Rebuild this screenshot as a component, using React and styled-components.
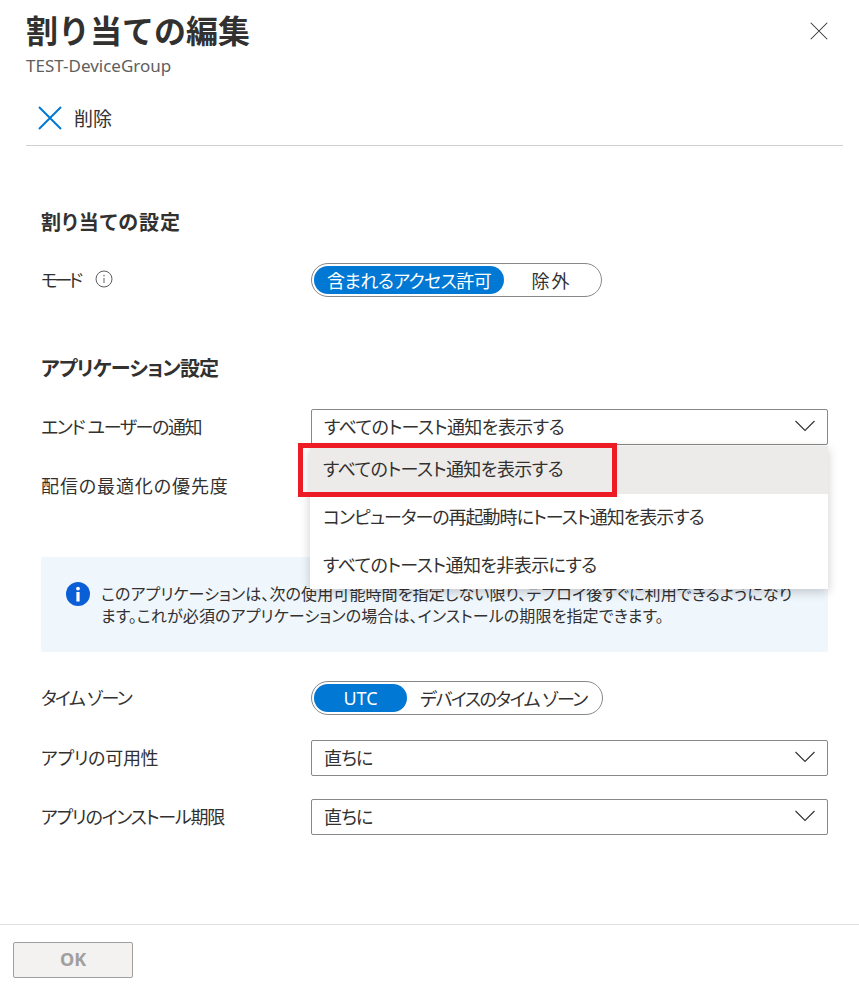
import React from 'react';
import styled, { createGlobalStyle } from 'styled-components';

const GlobalStyle = createGlobalStyle`
  html, body {
    margin: 0;
    padding: 0;
    background: #fff;
  }
  body {
    font-family: "Noto Sans", "Noto Sans CJK JP", sans-serif;
    font-feature-settings: "palt";
    color: #323130;
  }
`;

const Blade = styled.div`
  width: 859px;
  height: 984px;
  display: flex;
  flex-direction: column;
  overflow: hidden;
`;

const Header = styled.header`
  display: flex;
  justify-content: space-between;
  padding: 8px 31px 0 26px;
  height: 81px;
  box-sizing: border-box;
`;

const Title = styled.h1`
  margin: 0;
  font-size: 32px;
  line-height: 46px;
  font-weight: 700;
  font-feature-settings: normal;
`;

const Subtitle = styled.div`
  font-size: 17px;
  line-height: 24px;
  color: #605e5c;
`;

const CloseButton = styled.div`
  margin-top: 14px;
  width: 18px;
  height: 18px;
  line-height: 0;
`;

const Toolbar = styled.div`
  margin: 0 16px 0 26px;
  height: 65px;
  padding: 9px 0 0 12px;
  box-sizing: border-box;
  display: flex;
  align-items: center;
  gap: 12px;
  border-bottom: 1px solid #d2d0ce;
  font-size: 19px;
`;

const Content = styled.main`
  flex: 1;
  padding: 61px 31px 0 41px;
`;

const SectionTitle = styled.h2`
  margin: 0 0 ${p => p.$gap ?? 23}px;
  font-size: 20px;
  line-height: 32px;
  font-weight: 700;
  letter-spacing: ${p => p.$track ?? 0}px;
`;

const Row = styled.div`
  display: grid;
  grid-template-columns: 270px 517px;
  align-items: center;
  min-height: 36px;
  margin-bottom: ${p => p.$gap ?? 23}px;
`;

const Label = styled.div`
  display: flex;
  align-items: center;
  gap: 15px;
  padding-bottom: 2px;
  font-size: 18px;
`;

// the reference's UI font sets kana tighter than kanji, so strings are tracked one by one
const Text = styled.span`
  letter-spacing: ${p => p.$track ?? 0}px;
  white-space: nowrap;
`;

const Pill = styled.div`
  display: inline-flex;
  justify-self: start;
  align-items: center;
  height: 34px;
  width: ${p => p.$w}px;
  box-sizing: border-box;
  padding: 2px;
  border: 1px solid #8a8886;
  border-radius: 17px;
`;

const PillOption = styled.div`
  height: 100%;
  display: flex;
  align-items: center;
  justify-content: center;
  flex: ${p => (p.$active ? `0 0 ${p.$w}px` : 1)};
  border-radius: 14px;
  padding-bottom: 1px;
  box-sizing: border-box;
  font-size: 18px;
  background: ${p => (p.$active ? '#0078d4' : 'transparent')};
  color: ${p => (p.$active ? '#fff' : '#323130')};
`;

const SelectWrap = styled.div`
  position: relative;
`;

const Select = styled.div`
  height: 36px;
  box-sizing: border-box;
  display: flex;
  align-items: center;
  justify-content: space-between;
  padding: 0 12px 2px;
  border: 1px solid #8a8886;
  border-radius: 2px;
  font-size: 18px;
`;

const Menu = styled.div`
  position: absolute;
  top: 37px;
  left: -1px;
  right: 0;
  z-index: 5;
  background: #fff;
  box-shadow: 0 3px 10px rgba(0, 0, 0, 0.2);
`;

const MenuItem = styled.div`
  height: 47.7px;
  box-sizing: border-box;
  display: flex;
  align-items: center;
  padding: 0 0 3px 13px;
  font-size: 18px;
  background: ${p => (p.$selected ? '#edebe9' : '#fff')};
`;

const Highlight = styled.div`
  position: absolute;
  top: 34px;
  left: -13px;
  width: 319px;
  height: 54px;
  box-sizing: border-box;
  border: 5px solid #ed1c24;
  z-index: 6;
`;

const InfoBox = styled.div`
  display: flex;
  gap: 11px;
  height: 95px;
  box-sizing: border-box;
  padding: 25px 0 0 25px;
  margin: 53px 0 28px;
  background: #eff6fc;
  border-radius: 2px;
  font-size: 16px;
  line-height: 22px;
`;

const InfoText = styled.div`
  margin-top: 1px;
  display: flex;
  flex-direction: column;
`;

const Footer = styled.footer`
  height: 60px;
  box-sizing: border-box;
  padding: 17px 13px 0;
  border-top: 1px solid #e1dfdd;
`;

const OkButton = styled.div`
  width: 120px;
  height: 36px;
  box-sizing: border-box;
  padding-bottom: 2px;
  display: flex;
  align-items: center;
  justify-content: center;
  background: #f3f2f1;
  border: 1px solid #a19f9d;
  border-radius: 2px;
  color: #a19f9d;
  font-size: 18px;
  font-weight: 700;
`;

const Cross = ({ size, color, width }) => (
  <svg width={size} height={size} viewBox="0 0 24 24" fill="none">
    <path d="M1 1L23 23M23 1L1 23" stroke={color} strokeWidth={width} />
  </svg>
);

const Chevron = () => (
  <svg width="20" height="12" viewBox="0 0 20 12" fill="none">
    <path d="M0.5 1L10 10.5L19.5 1" stroke="#323130" strokeWidth="1.1" />
  </svg>
);

const InfoOutline = () => (
  <svg width="18" height="18" viewBox="0 0 18 18" fill="none">
    <circle cx="9" cy="9" r="8" stroke="#605e5c" strokeWidth="1" />
    <path d="M9 8V13" stroke="#8a8886" strokeWidth="1.3" />
    <circle cx="9" cy="5.6" r="0.9" fill="#8a8886" />
  </svg>
);

const InfoSolid = () => (
  <svg width="24" height="24" viewBox="0 0 24 24" style={{ flexShrink: 0 }}>
    <circle cx="12" cy="12" r="12" fill="#0a5fd6" />
    <rect x="10.4" y="10" width="3.2" height="9.5" fill="#fff" />
    <circle cx="12" cy="6.6" r="1.9" fill="#fff" />
  </svg>
);

const SelectField = ({ children, track }) => (
  <Select>
    <Text $track={track}>{children}</Text>
    <Chevron />
  </Select>
);

const App = () => (
  <Blade>
    <GlobalStyle />
    <Header>
      <div>
        <Title>割り当ての編集</Title>
        <Subtitle>TEST-DeviceGroup</Subtitle>
      </div>
      <CloseButton>
        <Cross size={18} color="#323130" width={1.4} />
      </CloseButton>
    </Header>
    <Toolbar>
      <Cross size={24} color="#0078d4" width={2} />
      <span>削除</span>
    </Toolbar>
    <Content>
      <SectionTitle $track={1}>割り当ての設定</SectionTitle>
      <Row $gap={55}>
        <Label>
          <Text $track={-3.5}>モード</Text>
          <InfoOutline />
        </Label>
        <Pill $w={291}>
          <PillOption $active $w={190}><Text $track={-0.6}>含まれるアクセス許可</Text></PillOption>
          <PillOption><Text $track={2}>除外</Text></PillOption>
        </Pill>
      </Row>
      <SectionTitle $gap={24} $track={-0.8}>アプリケーション設定</SectionTitle>
      <Row>
        <Label><Text $track={-1.4}>エンド ユーザーの通知</Text></Label>
        <SelectWrap>
          <SelectField track={-0.55}>すべてのトースト通知を表示する</SelectField>
          <Menu>
            <MenuItem $selected><Text $track={-0.55}>すべてのトースト通知を表示する</Text></MenuItem>
            <MenuItem><Text $track={-1}>コンピューターの再起動時にトースト通知を表示する</Text></MenuItem>
            <MenuItem><Text $track={-0.6}>すべてのトースト通知を非表示にする</Text></MenuItem>
          </Menu>
          <Highlight />
        </SelectWrap>
      </Row>
      <Row $gap={0}>
        <Label><Text $track={0.9}>配信の最適化の優先度</Text></Label>
        <SelectField />
      </Row>
      <InfoBox>
        <InfoSolid />
        <InfoText>
          <Text $track={0.1}>このアプリケーションは、次の使用可能時間を指定しない限り、デプロイ後すぐに利用できるようになり</Text>
          <Text $track={0.12}>ます。これが必須のアプリケーションの場合は、インストールの期限を指定できます。</Text>
        </InfoText>
      </InfoBox>
      <Row $gap={24}>
        <Label><Text $track={-1.7}>タイム ゾーン</Text></Label>
        <Pill $w={292}>
          <PillOption $active $w={93}>UTC</PillOption>
          <PillOption><Text $track={-1.5}>デバイスのタイム ゾーン</Text></PillOption>
        </Pill>
      </Row>
      <Row>
        <Label><Text $track={-0.3}>アプリの可用性</Text></Label>
        <SelectField track={-1}>直ちに</SelectField>
      </Row>
      <Row>
        <Label><Text $track={-1.2}>アプリのインストール期限</Text></Label>
        <SelectField track={-1}>直ちに</SelectField>
      </Row>
    </Content>
    <Footer>
      <OkButton>OK</OkButton>
    </Footer>
  </Blade>
);

export default App;
